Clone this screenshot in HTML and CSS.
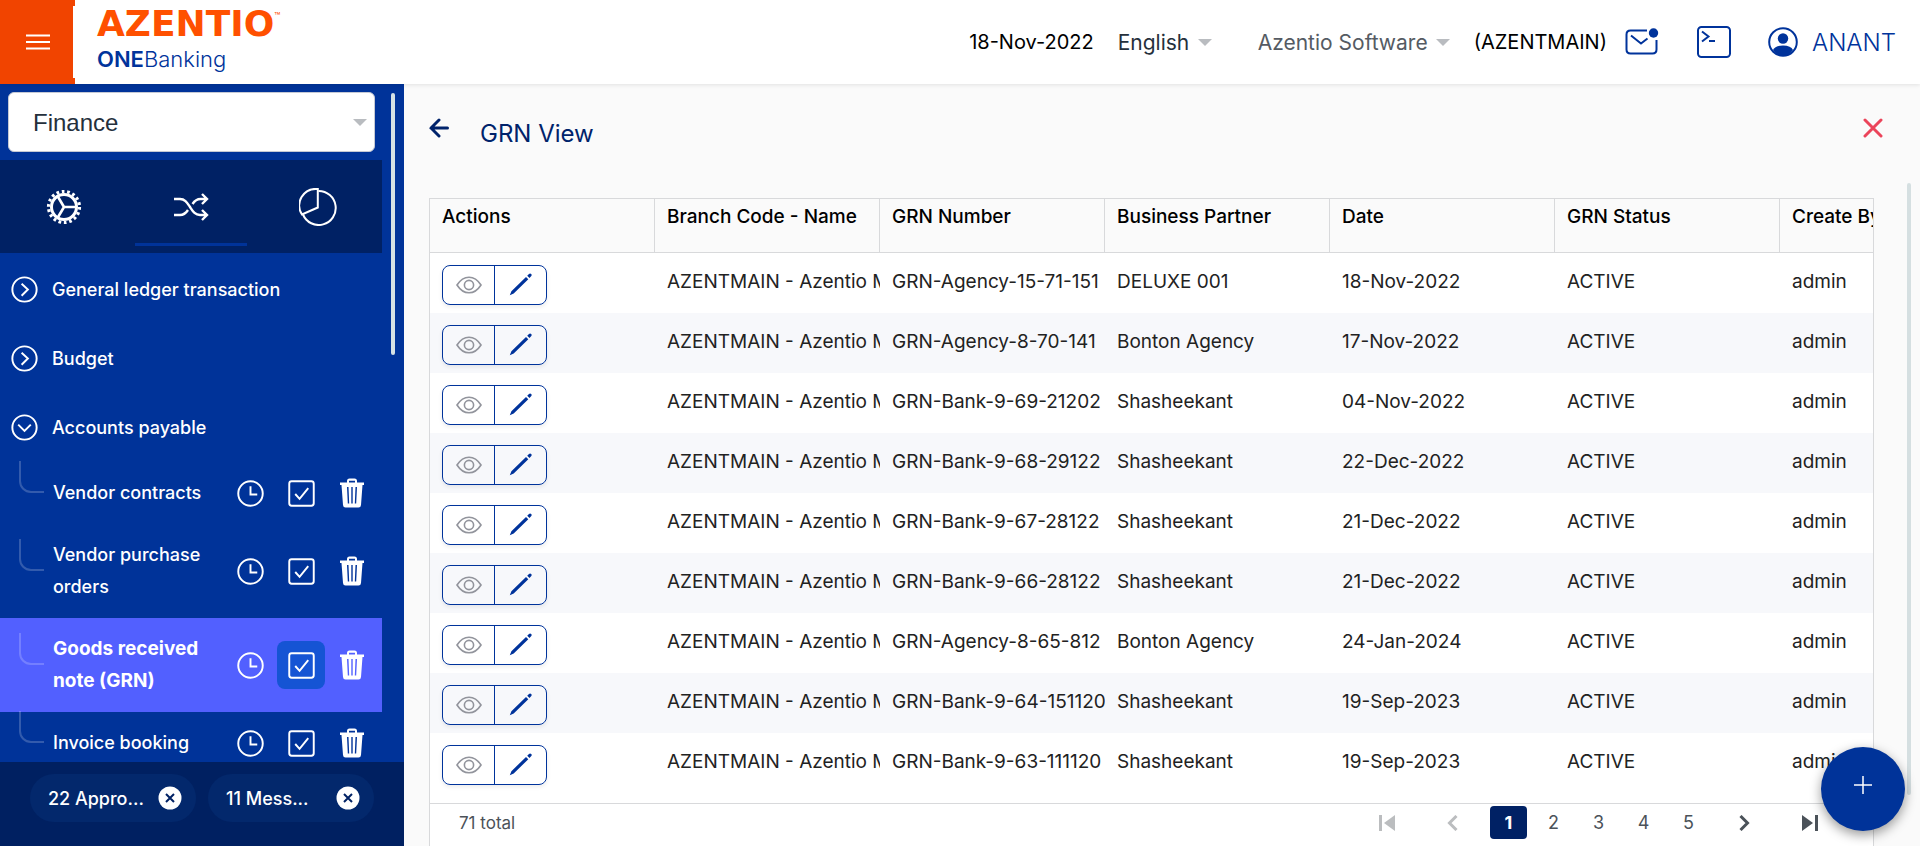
FILE: index.html
```html
<!DOCTYPE html>
<html lang="en">
<head>
<meta charset="utf-8">
<meta name="viewport" content="width=device-width, initial-scale=1">
<title>GRN View - ONEBanking</title>
<link rel="stylesheet" href="styles.css">
</head>
<body>
<svg class="sprite" aria-hidden="true">
  <symbol id="i-right" viewBox="0 0 28 28"><circle cx="14" cy="14" r="12.6"/><path d="M11 8l6.500 6-6.500 6.500"/></symbol>
  <symbol id="i-down" viewBox="0 0 28 28"><circle cx="14" cy="14" r="12.6"/><path d="M7.500 11l6.500 6.500 6.500-6.500"/></symbol>
  <symbol id="i-clock" viewBox="0 0 28 28"><circle cx="14" cy="14" r="12.700"/><path d="M14 6.500V15h7"/></symbol>
  <symbol id="i-check" viewBox="0 0 28 28"><rect x="1.300" y="1.300" width="25.400" height="25.400" rx="2.500"/><path d="M7.500 14.500l4.500 5 9-11"/></symbol>
  <symbol id="i-trash" viewBox="0 0 26 30"><path fill="currentColor" stroke="none" fill-rule="evenodd" d="M1 4.500h7V3q0-2.500 2.500-2.500h5Q18 .5 18 3v1.500h7V7h-1.500L22 27q-.2 2.500-2.500 2.500h-13Q4.200 29.500 4 27L2.500 7H1zM10 4.500h6V2.800h-6zM8 9l.8 16.500h1.400L9.500 9zm4.300 0v16.500h1.400V9zm4.200 0-.7 16.500h1.400L18 9z"/></symbol>
  <symbol id="i-eye" viewBox="0 0 26 18"><path stroke-width="1.600" d="M1 9Q6 1.200 13 1.200T25 9Q20 16.800 13 16.800T1 9z"/><circle cx="13" cy="9" r="4.600" stroke-width="1.600"/></symbol>
  <symbol id="i-pencil" viewBox="0 0 24 24"><path fill="currentColor" stroke="none" d="M.8 23.300l1.600-4L17 4.900l2.300 2.300L4.700 21.600zM18.200 3.800l1.800-1.900q1.100-1 2.200 0t.1 2.200L20.500 6z"/></symbol>
  <symbol id="i-caret" viewBox="0 0 14 7"><path fill="currentColor" stroke="none" d="M0 0h14L7 7z"/></symbol>
  <symbol id="i-x" viewBox="0 0 24 24"><circle cx="12" cy="12" r="11.500" fill="#fff" stroke="none"/><path d="M8 8l8 8M16 8l-8 8" stroke="#002164" stroke-width="2"/></symbol>
</svg>

<header class="topbar">
  <button class="burger" type="button" aria-label="Menu"><svg class="icon" width="24" height="16" viewBox="0 0 24 16"><path d="M0 1.500h24M0 8h24M0 14.500h24"/></svg></button>
  <a class="brand" href="#"><span class="brand-name">AZENTIO<sup>™</sup></span><span class="brand-sub"><b>ONE</b>Banking</span></a>
  <div class="tools">
    <time class="date">18-Nov-2022</time>
    <label class="pick lang"><select aria-label="Language"><option>English</option></select><svg class="caret"><use href="#i-caret"/></svg></label>
    <label class="pick org"><select aria-label="Organisation"><option>Azentio Software</option></select><svg class="caret"><use href="#i-caret"/></svg></label>
    <span class="code">(AZENTMAIN)</span>
    <button class="tool mail" type="button" aria-label="Messages"><svg class="icon" width="34" height="28" viewBox="0 0 34 28"><path d="M22 2.500H5.500Q1.500 2.500 1.500 6.500v15Q1.500 25.500 5.500 25.500h22q4 0 4-4V12M6 7.500l10 8 6.500-5"/><circle cx="28.500" cy="5" r="4.700" fill="currentColor" stroke="none"/></svg></button>
    <button class="tool term" type="button" aria-label="Console"><svg class="icon" width="34" height="32" viewBox="0 0 34 32"><rect x="1" y="1" width="32" height="30" rx="3.500"/><path d="M5 5.500l6.500 5L5 15.500M12 15h6"/></svg></button>
    <a class="user" href="#"><svg class="icon" width="30" height="30" viewBox="0 0 30 30"><circle cx="15" cy="15" r="13.800"/><circle cx="15" cy="11.500" r="5.200" fill="currentColor" stroke="none"/><path fill="currentColor" stroke="none" d="M5 23q2-4.500 10-4.500T25 23q-4 6-10 6T5 23z"/></svg>ANANT</a>
  </div>
</header>

<div class="shell">
  <aside class="side">
    <div class="side-body">
      <div class="side-scroll">
        <label class="module"><select aria-label="Module"><option>Finance</option></select><svg class="caret"><use href="#i-caret"/></svg></label>
        <nav class="tabs" aria-label="Sections">
          <button type="button" aria-label="Settings"><svg class="icon" width="36" height="36" viewBox="0 0 36 36"><circle cx="18" cy="18" r="12.500" stroke-width="3"/><circle cx="18" cy="18" r="15.500" stroke-width="3.200" stroke-dasharray="2.700 2.710"/><path d="M18 18h12.500M18 18l-6.500-11M18 18l-6.500 11" stroke-width="2.600"/></svg></button>
          <button type="button" class="on" aria-label="Transactions"><svg class="icon" width="36" height="30" viewBox="0 0 36 30"><path stroke-width="2.400" d="M1 7h6c5 0 7 3.500 10 8s5 8 10 8h7M1 23h6c4 0 6-2 8-5M19.500 12c2-3 4-5 8-5H34M29 2l5 5-5 5M29 18l5 5-5 5"/></svg></button>
          <button type="button" aria-label="Reports"><svg class="icon" width="38" height="38" viewBox="0 0 38 38"><path d="M19.500 3A17 17 0 1 1 4 26.500"/><path d="M18 1A16.500 16.500 0 0 0 3 26.500L18.800 19.500V1z"/></svg></button>
        </nav>
        <ul class="menu">
          <li class="group"><svg class="icon"><use href="#i-right"/></svg><a href="#">General ledger transaction</a></li>
          <li class="group"><svg class="icon"><use href="#i-right"/></svg><a href="#">Budget</a></li>
          <li class="group"><svg class="icon"><use href="#i-down"/></svg><a href="#">Accounts payable</a></li>
          <li class="item"><span class="branch"></span><a href="#">Vendor contracts</a><button type="button" aria-label="History"><svg class="icon"><use href="#i-clock"/></svg></button><button type="button" aria-label="Approve"><svg class="icon"><use href="#i-check"/></svg></button><button type="button" aria-label="Delete"><svg class="icon trash"><use href="#i-trash"/></svg></button></li>
          <li class="item"><span class="branch"></span><a href="#">Vendor purchase orders</a><button type="button" aria-label="History"><svg class="icon"><use href="#i-clock"/></svg></button><button type="button" aria-label="Approve"><svg class="icon"><use href="#i-check"/></svg></button><button type="button" aria-label="Delete"><svg class="icon trash"><use href="#i-trash"/></svg></button></li>
          <li class="item active"><span class="branch"></span><a href="#">Goods received note (GRN)</a><button type="button" aria-label="History"><svg class="icon"><use href="#i-clock"/></svg></button><button type="button" class="hot" aria-label="Approve"><svg class="icon"><use href="#i-check"/></svg></button><button type="button" aria-label="Delete"><svg class="icon trash"><use href="#i-trash"/></svg></button></li>
          <li class="item"><span class="branch"></span><a href="#">Invoice booking</a><button type="button" aria-label="History"><svg class="icon"><use href="#i-clock"/></svg></button><button type="button" aria-label="Approve"><svg class="icon"><use href="#i-check"/></svg></button><button type="button" aria-label="Delete"><svg class="icon trash"><use href="#i-trash"/></svg></button></li>
        </ul>
      </div>
      <div class="side-bar"></div>
    </div>
    <div class="side-foot">
      <span class="pill">22 Appro...<button type="button" aria-label="Dismiss approvals"><svg class="icon"><use href="#i-x"/></svg></button></span>
      <span class="pill">11 Mess...<button type="button" aria-label="Dismiss messages"><svg class="icon"><use href="#i-x"/></svg></button></span>
    </div>
  </aside>

  <main class="main">
    <div class="title">
      <button type="button" class="back" aria-label="Back"><svg class="icon" width="20" height="20" viewBox="0 0 20 20"><path d="M18.500 10H2M10 2l-8 8 8 8"/></svg></button>
      <h1>GRN View</h1>
      <button type="button" class="close" aria-label="Close"><svg class="icon" width="20" height="20" viewBox="0 0 20 20"><path d="M2 2l16 16M18 2L2 18"/></svg></button>
    </div>
    <div class="content">
      <section class="grid">
        <div class="grid-view">
          <table>
            <thead><tr><th>Actions</th><th>Branch Code - Name</th><th>GRN Number</th><th>Business Partner</th><th>Date</th><th>GRN Status</th><th>Create By</th></tr></thead>
            <tbody>
              <tr><td><span class="acts"><button type="button" aria-label="View"><svg class="icon eye"><use href="#i-eye"/></svg></button><button type="button" aria-label="Edit"><svg class="icon pen"><use href="#i-pencil"/></svg></button></span></td><td>AZENTMAIN - Azentio M</td><td>GRN-Agency-15-71-151</td><td>DELUXE 001</td><td>18-Nov-2022</td><td>ACTIVE</td><td>admin</td></tr>
              <tr><td><span class="acts"><button type="button" aria-label="View"><svg class="icon eye"><use href="#i-eye"/></svg></button><button type="button" aria-label="Edit"><svg class="icon pen"><use href="#i-pencil"/></svg></button></span></td><td>AZENTMAIN - Azentio M</td><td>GRN-Agency-8-70-141</td><td>Bonton Agency</td><td>17-Nov-2022</td><td>ACTIVE</td><td>admin</td></tr>
              <tr><td><span class="acts"><button type="button" aria-label="View"><svg class="icon eye"><use href="#i-eye"/></svg></button><button type="button" aria-label="Edit"><svg class="icon pen"><use href="#i-pencil"/></svg></button></span></td><td>AZENTMAIN - Azentio M</td><td>GRN-Bank-9-69-21202</td><td>Shasheekant</td><td>04-Nov-2022</td><td>ACTIVE</td><td>admin</td></tr>
              <tr><td><span class="acts"><button type="button" aria-label="View"><svg class="icon eye"><use href="#i-eye"/></svg></button><button type="button" aria-label="Edit"><svg class="icon pen"><use href="#i-pencil"/></svg></button></span></td><td>AZENTMAIN - Azentio M</td><td>GRN-Bank-9-68-29122</td><td>Shasheekant</td><td>22-Dec-2022</td><td>ACTIVE</td><td>admin</td></tr>
              <tr><td><span class="acts"><button type="button" aria-label="View"><svg class="icon eye"><use href="#i-eye"/></svg></button><button type="button" aria-label="Edit"><svg class="icon pen"><use href="#i-pencil"/></svg></button></span></td><td>AZENTMAIN - Azentio M</td><td>GRN-Bank-9-67-28122</td><td>Shasheekant</td><td>21-Dec-2022</td><td>ACTIVE</td><td>admin</td></tr>
              <tr><td><span class="acts"><button type="button" aria-label="View"><svg class="icon eye"><use href="#i-eye"/></svg></button><button type="button" aria-label="Edit"><svg class="icon pen"><use href="#i-pencil"/></svg></button></span></td><td>AZENTMAIN - Azentio M</td><td>GRN-Bank-9-66-28122</td><td>Shasheekant</td><td>21-Dec-2022</td><td>ACTIVE</td><td>admin</td></tr>
              <tr><td><span class="acts"><button type="button" aria-label="View"><svg class="icon eye"><use href="#i-eye"/></svg></button><button type="button" aria-label="Edit"><svg class="icon pen"><use href="#i-pencil"/></svg></button></span></td><td>AZENTMAIN - Azentio M</td><td>GRN-Agency-8-65-812</td><td>Bonton Agency</td><td>24-Jan-2024</td><td>ACTIVE</td><td>admin</td></tr>
              <tr><td><span class="acts"><button type="button" aria-label="View"><svg class="icon eye"><use href="#i-eye"/></svg></button><button type="button" aria-label="Edit"><svg class="icon pen"><use href="#i-pencil"/></svg></button></span></td><td>AZENTMAIN - Azentio M</td><td>GRN-Bank-9-64-151120</td><td>Shasheekant</td><td>19-Sep-2023</td><td>ACTIVE</td><td>admin</td></tr>
              <tr><td><span class="acts"><button type="button" aria-label="View"><svg class="icon eye"><use href="#i-eye"/></svg></button><button type="button" aria-label="Edit"><svg class="icon pen"><use href="#i-pencil"/></svg></button></span></td><td>AZENTMAIN - Azentio M</td><td>GRN-Bank-9-63-111120</td><td>Shasheekant</td><td>19-Sep-2023</td><td>ACTIVE</td><td>admin</td></tr>
            </tbody>
          </table>
        </div>
        <footer class="pager">
          <span class="total">71 total</span>
          <nav class="pages" aria-label="Pages">
            <button type="button" class="arrow off" aria-label="First page"><svg width="16" height="16" viewBox="0 0 16 16"><path fill="currentColor" d="M0 0h3v16H0zM16 0v16L5 8z"/></svg></button>
            <button type="button" class="arrow off" aria-label="Previous page"><svg class="icon" width="16" height="16" viewBox="0 0 16 16"><path d="M11.500 1l-7 7 7 7"/></svg></button>
            <button type="button" class="num on">1</button>
            <button type="button" class="num">2</button>
            <button type="button" class="num">3</button>
            <button type="button" class="num">4</button>
            <button type="button" class="num">5</button>
            <button type="button" class="arrow" aria-label="Next page"><svg class="icon" width="16" height="16" viewBox="0 0 16 16"><path d="M4.500 1l7 7-7 7"/></svg></button>
            <button type="button" class="arrow" aria-label="Last page"><svg width="16" height="16" viewBox="0 0 16 16"><path fill="currentColor" d="M13 0h3v16h-3zM0 0v16l11-8z"/></svg></button>
          </nav>
        </footer>
      </section>
      <div class="main-bar"></div>
    </div>
    <button type="button" class="fab" aria-label="Add"><svg class="icon" width="18" height="18" viewBox="0 0 18 18"><path d="M9 0v18M0 9h18"/></svg></button>
  </main>
</div>
</body>
</html>
```

FILE: styles.css
```css
* { box-sizing: border-box; }
body {
  margin: 0;
  height: 100vh;
  display: flex;
  flex-direction: column;
  overflow: hidden;
  font-family: Inter, "Liberation Sans", sans-serif;
  font-size: 20px;
  color: #000;
  background: #fafafa;
}
button { border: 0; padding: 0; background: none; color: inherit; font: inherit; cursor: pointer; display: flex; align-items: center; justify-content: center; }
select { appearance: none; border: 0; padding: 0; background: none; color: inherit; font: inherit; }
a { color: inherit; text-decoration: none; }
.sprite { display: none; }
.icon { fill: none; stroke: currentColor; stroke-width: 2; flex: none; display: block; }
.caret { width: 14px; height: 7px; color: #b9bcc0; flex: none; }

/* Top bar */
.topbar { flex: none; height: 84px; display: flex; background: #fff; box-shadow: 0 1px 4px rgba(0, 0, 0, .1); position: relative; z-index: 1; }
.burger { width: 75px; background: linear-gradient(#fff, #fff) right center / 2px 72px no-repeat #f14400; color: #fff; }
.brand { display: flex; flex-direction: column; padding: 6px 0 0 22px; }
.brand-name { font: bold 36px/36px "DejaVu Sans", sans-serif; color: #ff5000; display: flex; }
.brand-name sup { font: 10px/20px Inter, sans-serif; }
.brand-sub { font-size: 22px; line-height: 34px; font-weight: 300; color: #00339b; }
.brand-sub b { font-weight: 600; }
.tools { margin-left: auto; display: flex; align-items: center; padding-right: 24px; }
.pick { display: flex; align-items: center; gap: 8px; font-size: 21px; }
.lang { margin-left: 24px; color: #25303c; }
.org { margin-left: 46px; color: #555b63; }
.code { margin-left: 24px; }
.tool { color: #00339b; }
.mail { margin-left: 18px; }
.term { margin-left: 38px; }
.user { margin-left: 37px; display: flex; align-items: center; gap: 14px; color: #00339b; font-size: 24px; font-weight: 300; }

/* Sidebar */
.shell { flex: 1; min-height: 0; display: flex; }
.side { flex: none; width: 404px; display: flex; flex-direction: column; background: #003399; color: #fff; font-size: 18px; font-weight: 500; }
.side-body { flex: 1; min-height: 0; display: flex; overflow: hidden; }
.side-scroll { width: 382px; }
.side-bar { width: 4px; height: 262px; margin: 9px 0 0 9px; background: #d5e2e5; border-radius: 2px; }
.module { display: flex; align-items: center; height: 60px; margin: 8px 7px 8px 8px; padding: 0 7px 0 24px; background: #fff; border: 1px solid #c5c9d4; border-radius: 6px; color: #25303c; font-family: "Liberation Sans", sans-serif; font-size: 24px; font-weight: 400; }
.module select { flex: 1; }
.tabs { display: flex; height: 93px; background: #002164; }
.tabs button { flex: 1; position: relative; }
.tabs .on::after { content: ""; position: absolute; left: 8px; right: 8px; bottom: 7px; height: 3px; background: #003399; }
.menu { list-style: none; margin: 2px 0 0; padding: 0; }
.group { display: flex; align-items: center; height: 69px; padding-left: 11px; gap: 14px; }
.group .icon, .item .icon { width: 27px; height: 27px; }
.item { display: flex; align-items: center; padding: 15px 6px 15px 19px; line-height: 32px; }
.item a { flex: 1; }
.item button { width: 48px; height: 48px; margin: -8px 0 -8px 3px; border-radius: 8px; }
.item .trash { width: 26px; height: 30px; }
.branch { width: 25px; height: 32px; margin: -16px 9px 16px 0; border: solid rgba(255, 255, 255, .2); border-width: 0 0 2px 2px; border-radius: 0 0 0 12px; }
.active { background: #5260ff; font-size: 19px; font-weight: 700; }
.item .hot { background: #1554d4; }
.side-foot { flex: none; height: 84px; padding: 12px 30px; display: flex; gap: 12px; align-items: flex-start; background: #002061; }
.pill { flex: 1; display: flex; align-items: center; justify-content: space-between; height: 48px; padding: 0 14px 0 18px; border-radius: 24px; background: #03286c; white-space: nowrap; }
.pill .icon { width: 24px; height: 24px; }

/* Main area */
.main { flex: 1; min-width: 0; display: flex; flex-direction: column; position: relative; }
.title { height: 99px; display: flex; align-items: flex-start; padding: 32px 37px 0 25px; color: #00236b; }
.title button { height: 24px; }
.title .icon { stroke-width: 3; stroke-linecap: round; }
.title h1 { margin: 0 auto 0 31px; font-size: 24px; line-height: 36px; font-weight: 400; }
.close { color: #eb445a; }
.content { flex: 1; min-height: 0; display: flex; }
.grid { flex: 1; min-width: 0; margin: 15px 33px 0 25px; border: solid #d8d9db; border-width: 1px 1px 0; background: #fff; display: flex; flex-direction: column; }
.main-bar { width: 4px; margin-right: 9px; margin-bottom: 51px; background: #d5dfe1; border-radius: 2px; }
.grid-view { overflow: hidden; padding-bottom: 10px; flex: none; }
table { width: 1575px; table-layout: fixed; border-collapse: separate; border-spacing: 0; font-size: 19px; }
th, td { padding: 0 0 0 12px; overflow: hidden; white-space: nowrap; text-align: left; vertical-align: top; }
th { height: 54px; font-weight: 500; line-height: 36px; background: #fafafa; border: solid #d8d9db; border-width: 0 1px 1px 0; }
td { height: 60px; line-height: 58px; color: #222; }
tbody tr:nth-child(even) { background: #f7f8fb; }
.acts { display: flex; width: 105px; height: 40px; margin: 12px 0 8px; border: 1px solid #00339b; border-radius: 8px; box-shadow: 0 2px 4px rgba(0, 0, 0, .08); }
.acts button { flex: 1; }
.acts button + button { border-left: 1px solid #00339b; color: #00339b; }
.eye { width: 26px; height: 18px; color: #92949c; }
.pen { width: 24px; height: 24px; margin-bottom: 2px; }
.pager { height: 43px; border-top: 1px solid #d8d9db; display: flex; align-items: flex-start; justify-content: space-between; padding: 2px 30px 0 29px; font-size: 18px; line-height: 34px; color: #4b5259; }
.total { font-size: 17px; }
.pages { display: flex; align-items: center; }
.num { width: 37px; height: 33px; margin: 0 4px; border-radius: 4px; }
.num.on { background: #002164; color: #fff; font-weight: 700; }
.arrow { width: 66px; height: 32px; }
.arrow .icon { stroke-width: 3; }
.arrow.off { color: #bbbdbf; }
.fab { position: absolute; right: 15px; bottom: 15px; width: 84px; height: 84px; border-radius: 50%; padding-bottom: 8px; background: #003399; color: #fff; box-shadow: 0 4px 12px rgba(0, 0, 0, .4); }
.fab .icon { stroke-width: 1.5px; }
```
